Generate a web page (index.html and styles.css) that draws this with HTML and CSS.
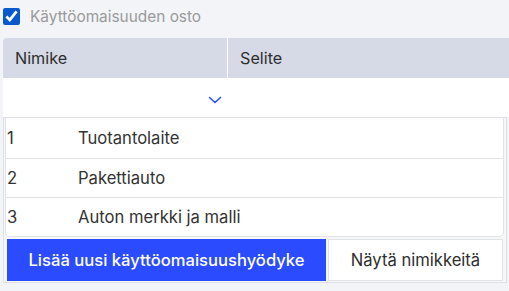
FILE: index.html
```html
<!DOCTYPE html>
<html lang="fi">
<head>
    <meta charset="UTF-8">
    <title>Käyttöomaisuus</title>
    <link rel="stylesheet" href="styles.css">
</head>
<body>
    <label class="check-row">
        <input type="checkbox" class="check" checked>
        <span class="check-label">Käyttöomaisuuden osto</span>
    </label>

    <div class="table">
        <div class="table-head">
            <div class="th">Nimike</div>
            <div class="th">Selite</div>
        </div>
        <div class="table-row">
            <div class="select-cell">
                <svg class="chevron" width="14" height="8" viewBox="0 0 14 8">
                    <path d="M1.5 1.5 L7 6.5 L12.5 1.5" fill="none" stroke="#2b4bff" stroke-width="1.6" stroke-linecap="round" stroke-linejoin="round"/>
                </svg>
            </div>
            <div></div>
        </div>
    </div>

    <div class="popover">
        <div class="option-list">
            <div class="option"><span class="option-num">1</span><span>Tuotantolaite</span></div>
            <div class="option"><span class="option-num">2</span><span>Pakettiauto</span></div>
            <div class="option"><span class="option-num">3</span><span>Auton merkki ja malli</span></div>
        </div>
        <div class="popover-actions">
            <button class="btn btn-primary">Lisää uusi käyttöomaisuushyödyke</button>
            <button class="btn btn-secondary">Näytä nimikkeitä</button>
        </div>
    </div>
</body>
</html>
```

FILE: styles.css
```css
* {
    margin: 0;
    padding: 0;
    box-sizing: border-box;
    font-family: Inter, "Noto Sans", sans-serif;
}

body {
    background-color: #f3f4f8;
    width: 509px;
    height: 291px;
    overflow: hidden;
    color: #333;
}

.check-row {
    display: flex;
    align-items: center;
    height: 38px;
    padding: 0 0 6px 3px;
}

.check {
    width: 17px;
    height: 17px;
    accent-color: #1a73f5;
    margin: 0;
}

.check-label {
    margin-left: 10px;
    font-size: 15.4px;
    color: #9a9a9a;
}

.table {
    margin-left: 3px;
}

.table-head {
    display: grid;
    grid-template-columns: 224px 1fr;
    height: 40px;
    background-color: #d6dae6;
    border-top-left-radius: 4px;
}

.th {
    display: flex;
    align-items: center;
    padding-left: 12px;
    font-size: 16.2px;
    color: #2e2e2e;
}

.th + .th {
    border-left: 1px solid #fff;
}

.table-row {
    display: grid;
    grid-template-columns: 224px 1fr;
    height: 39px;
    background-color: #fff;
}

.select-cell {
    display: flex;
    align-items: center;
    justify-content: flex-end;
    padding: 4px 5px 0 0;
}

.popover {
    margin-left: 3px;
    width: 504px;
    background-color: #f6f7f9;
    border: 1px solid #dfe0e6;
    padding: 0 2px 1px 1px;
}

.option-list {
    background-color: #fff;
    border: 1px solid #e2e3e8;
    border-top: none;
    border-radius: 0 0 5px 5px;
}

.option {
    display: flex;
    align-items: center;
    height: 40px;
    font-size: 16.6px;
    color: #333;
}

.option + .option {
    border-top: 1px solid #e2e2e6;
    height: 39px;
}

.option-num {
    width: 72px;
    padding-left: 1px;
}

.popover-actions {
    display: flex;
    gap: 2px;
    padding: 2px 0 0 2px;
}

.btn {
    height: 42px;
    font-size: 16.6px;
    border: none;
    cursor: pointer;
}

.btn-primary {
    width: 319px;
    background-color: #2b4bff;
    color: #fff;
    font-weight: 500;
}

.btn-secondary {
    width: 175px;
    background-color: #fff;
    color: #2e2e2e;
    border: 1px solid #e2e3e8;
}
```
